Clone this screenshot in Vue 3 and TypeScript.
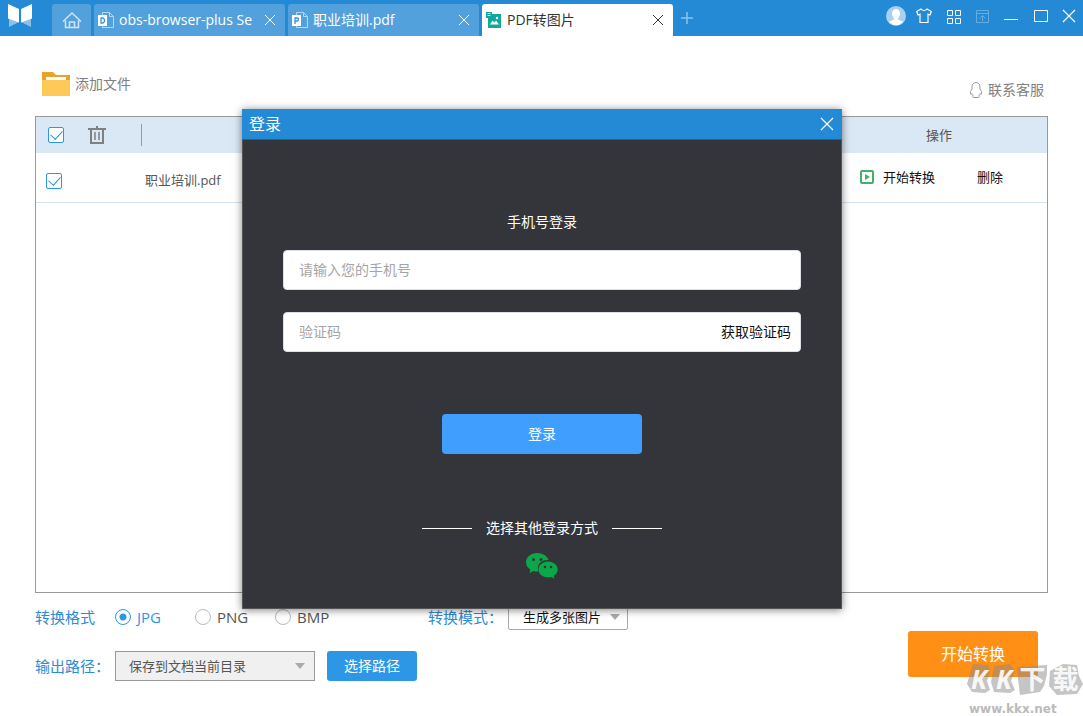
<script setup lang="ts">
import { ref } from 'vue'

interface Tab {
  title: string
  icon: 'obs' | 'pdf' | 'image'
  active: boolean
}

const tabs: Tab[] = [
  { title: 'obs-browser-plus Se', icon: 'obs', active: false },
  { title: '职业培训.pdf', icon: 'pdf', active: false },
  { title: 'PDF转图片', icon: 'image', active: true },
]
const formats = ['JPG', 'PNG', 'BMP']
const format = ref('JPG')
const allChecked = ref(true)
const files = ref([{ name: '职业培训.pdf', checked: true }])
const phone = ref('')
const code = ref('')
</script>

<template>
  <div class="app">
    <header class="titlebar">
      <svg class="logo" viewBox="0 0 26 24" aria-hidden="true">
        <path d="M2 13v10l10-5zM24 13v10l-10-5z" fill="#8dc0e8" />
        <path d="M1 0l11 5v13.500L1 14.500zM25 0L14 5v13.500l11-4z" fill="#fff" />
      </svg>
      <button class="home" aria-label="首页">
        <svg viewBox="0 0 20 18" fill="none" stroke="#cfe4f5" stroke-width="1.500">
          <path d="M1 10.500L10 2l9 8.500M3.500 9.500V16.500h13V9.500M7.500 16v-5h5v5" />
        </svg>
      </button>
      <div v-for="tab in tabs" :key="tab.title" class="tab" :class="{ active: tab.active }">
        <svg v-if="tab.icon === 'image'" class="tab-icon" viewBox="0 0 16 17">
          <path d="M0 0h6v2h9v14H2V6H0z" fill="#13a89e" />
          <path d="M1.500 1.500h3M1.500 3.500h3" stroke="#bfe9e5" />
          <path d="M4 12.500l2.500-4 2 2 1.500-2 3 4z" fill="#fff" />
          <circle cx="11" cy="6" r="1.200" fill="#fff" />
        </svg>
        <svg v-else class="tab-icon" viewBox="0 0 16 17">
          <path d="M4.500 3V.5h7l4 4v11h-11V14M11.500.5v4h4" fill="none" stroke="#b5d7f0" />
          <rect x="0" y="3" width="9" height="11" fill="#fff" />
          <path v-if="tab.icon === 'obs'" d="M3 6h2l1.500 1.500v2L5 11H3z" fill="none" stroke="#3a93d6" stroke-width="1.300" />
          <path v-else d="M3 12V6h2.500q1 0 1 1.500T5.500 9H3" fill="none" stroke="#3a93d6" stroke-width="1.300" />
        </svg>
        <span class="tab-title">{{ tab.title }}</span>
        <button class="tab-close" aria-label="关闭标签">
          <svg viewBox="0 0 12 12"><path d="M1 1l10 10M11 1L1 11" stroke="currentColor" fill="none" /></svg>
        </button>
      </div>
      <button class="add" aria-label="新建标签">
        <svg viewBox="0 0 12 12"><path d="M6 0v12M0 6h12" stroke="#8dc2ea" stroke-width="1.500" /></svg>
      </button>
      <div class="window-tools">
        <button class="account" aria-label="账户">
          <svg class="avatar" viewBox="0 0 20 20">
            <circle cx="10" cy="10" r="10" fill="#a9d0ef" />
            <path d="M6 7.500C6 1.500 14 1.500 14 7.500c0 2-1 3.500-2 4.500v1.500l4.500 2c.5.300.5.500.1.900A9.500 9.500 0 0 1 3.400 16.400c-.4-.4-.4-.6.1-.9l4.500-2V12C7 11 6 9.500 6 7.500z" fill="#fff" />
          </svg>
        </button>
        <button aria-label="皮肤">
          <svg viewBox="0 0 16 16"><path d="M5 1L.700 3.500 2 7l2-.8V14.500h8V6.200l2 .8 1.300-3.500L11 1C9.500 3 6.500 3 5 1z" fill="none" stroke="#fff" stroke-width="1.200" /></svg>
        </button>
        <button aria-label="应用">
          <svg viewBox="0 0 16 16" fill="none" stroke="#fff"><path d="M2.500 2.500h5v5h-5zM10.500 2.500h5v5h-5zM2.500 10.500h5v5h-5zM10.500 10.500h5v5h-5z" /></svg>
        </button>
        <button aria-label="置顶">
          <svg viewBox="0 0 16 16" fill="none" stroke="#66addf"><path d="M2.500 2.500h12v12h-12zM2.500 5.500h12M8.500 13V8M5.500 10.500l3-3 3 3" /></svg>
        </button>
        <button aria-label="最小化">
          <svg viewBox="0 0 16 16"><path d="M1 11.500h14" stroke="#fff" /></svg>
        </button>
        <button aria-label="最大化">
          <svg viewBox="0 0 16 16"><path d="M2.500 2.500h13v11h-13z" stroke="#fff" fill="none" /></svg>
        </button>
        <button aria-label="关闭">
          <svg viewBox="0 0 16 16"><path d="M2 2l12 12M14 2L2 14" stroke="#fff" stroke-width="1.200" /></svg>
        </button>
      </div>
    </header>

    <div class="toolbar">
      <button class="add-file">
        <svg viewBox="0 0 28 24" aria-hidden="true">
          <path d="M0 0h11l3 3h14v12H0z" fill="#eaa127" />
          <path d="M4 5h20v4H4z" fill="#fff" />
          <path d="M0 8h28v16H0z" fill="#ffc957" />
        </svg>
        添加文件
      </button>
      <a class="service" href="#">
        <svg viewBox="0 0 12 16" fill="none" stroke="#999">
          <path d="M6 .500C3.500.500 2 2.500 2 5v2C.500 9 .200 10.500.500 12c.5.300 1 0 1.300-.5.300 1 .7 1.800 1.500 2.500-1 .500-.8 1.500.2 1.500h5c1 0 1.200-1 .2-1.500.8-.7 1.200-1.500 1.500-2.500.3.500.8.800 1.300.500.300-1.500 0-3-1.500-5V5C10 2.500 8.500.500 6 .500z" />
        </svg>
        联系客服
      </a>
    </div>

    <main class="files">
      <table>
        <colgroup>
          <col class="col-check" />
          <col />
          <col class="col-action" />
        </colgroup>
        <thead>
          <tr>
            <th>
              <div class="head-tools">
                <input v-model="allChecked" type="checkbox" aria-label="全选" />
                <button aria-label="清空">
                  <svg viewBox="0 0 18 18" fill="none" stroke="#808080">
                    <path d="M0 3h18M9 0v3M3 3v14h12V3" stroke-width="2" />
                    <path d="M7 6v8M11 6v8" stroke-width="1.500" />
                  </svg>
                </button>
              </div>
            </th>
            <th></th>
            <th>操作</th>
          </tr>
        </thead>
        <tbody>
          <tr v-for="file in files" :key="file.name">
            <td class="cell-check"><input v-model="file.checked" type="checkbox" :aria-label="file.name" /></td>
            <td class="cell-name">{{ file.name }}</td>
            <td>
              <div class="actions">
                <button>
                  <svg viewBox="0 0 14 14"><rect x="1" y="1" width="12" height="12" rx="1" fill="none" stroke="#3fb26d" stroke-width="2" /><path d="M5 4l5 3-5 3z" fill="#3fb26d" /></svg>
                  开始转换
                </button>
                <button>删除</button>
              </div>
            </td>
          </tr>
        </tbody>
      </table>
    </main>

    <footer class="options">
      <div class="settings">
        <div class="row">
          <span class="caption">转换格式</span>
          <label v-for="f in formats" :key="f" class="radio" :class="{ on: format === f }">
            <input v-model="format" type="radio" name="format" :value="f" />{{ f }}
          </label>
          <label class="mode-label" for="mode">转换模式：</label>
          <div class="select mode">
            <select id="mode"><option>生成多张图片</option></select>
          </div>
        </div>
        <div class="row path">
          <label class="caption" for="path">输出路径：</label>
          <div class="select output">
            <select id="path"><option>保存到文档当前目录</option></select>
          </div>
          <button class="choose">选择路径</button>
        </div>
      </div>
      <button class="start">开始转换</button>
    </footer>

    <div class="overlay">
      <section class="dialog" role="dialog" aria-labelledby="login-title">
        <div class="dialog-head">
          <h2 id="login-title">登录</h2>
          <button aria-label="关闭登录">
            <svg viewBox="0 0 14 14"><path d="M1 1l12 12M13 1L1 13" stroke="#fff" stroke-width="1.200" /></svg>
          </button>
        </div>
        <form class="dialog-body" @submit.prevent>
          <p class="subtitle">手机号登录</p>
          <div class="field"><input v-model="phone" type="tel" placeholder="请输入您的手机号" aria-label="手机号" /></div>
          <div class="field">
            <input v-model="code" type="text" placeholder="验证码" aria-label="验证码" />
            <button type="button">获取验证码</button>
          </div>
          <button class="login" type="submit">登录</button>
          <div class="other"><span>选择其他登录方式</span></div>
          <button class="wechat" type="button" aria-label="微信登录">
            <svg viewBox="0 0 32 26">
              <path d="M11 0C5 0 0 4 0 9.300c0 3 1.700 5.600 4.300 7.300L3.500 20l4-2c1.500.4 3 .6 5 .5C10 11 16 6.500 22.500 7 21.500 3 16.500 0 11 0z" fill="#0ba84a" />
              <path d="M22 8.500c-5.500 0-9.500 3.700-9.500 8s4 8 9.500 8c1.200 0 2.300-.2 3.300-.5l3.200 1.800-.8-3c2.500-1.500 4-3.700 4-6.300 0-4.300-4.200-8-9.700-8z" fill="#0ba84a" />
              <g fill="#34353a"><circle cx="7.500" cy="6.500" r="1.500" /><circle cx="15" cy="6.500" r="1.500" /><circle cx="19" cy="14" r="1.300" /><circle cx="25" cy="14" r="1.300" /></g>
            </svg>
          </button>
        </form>
      </section>
    </div>

    <div class="watermark">
      <div class="mark">
        <svg viewBox="0 0 116 33" aria-hidden="true">
          <path d="M6 0l16 1 1 8-3 8 3 9-5 3-13-1-5-8 3-11zM27 2l16-2 5 7-4 10 4 9-5 3-16-1-3-10zM50 3l30-2v9l-3 12-4 6-20 3-2-16zM83 7l13-7 14 1 2 11 4 8-6 10-20 1-8-9z" fill="#8c8c8c" fill-opacity=".5" />
        </svg>
        <div class="letters"><i>K</i><i>K</i><span>下</span><span>载</span></div>
      </div>
      <div class="site">www.kkx.net</div>
    </div>
  </div>
</template>

<style>
body {
  margin: 0;
}
</style>

<style scoped>
.app {
  position: relative;
  display: flex;
  flex-direction: column;
  min-height: 100vh;
  background: #fff;
  color: #555;
  font-family: "Open Sans", "Noto Sans CJK SC", sans-serif;
  font-size: 14px;
  line-height: 20px;
}
* {
  box-sizing: border-box;
}
svg {
  display: block;
  flex: none;
}
button,
input,
select {
  font: inherit;
  color: inherit;
  margin: 0;
}
button {
  border: 0;
  padding: 0;
  background: none;
}

.titlebar {
  display: flex;
  align-items: flex-end;
  height: 36px;
  padding-left: 7px;
  background: #258ad5;
}
.logo {
  width: 26px;
  height: 24px;
  align-self: flex-start;
  margin: 4px 19px 0 0;
}
.home,
.tab {
  height: 32px;
  background: #52a1dd;
  border-radius: 3px 3px 0 0;
  margin-right: 3px;
}
.home {
  width: 39px;
  padding-left: 10px;
}
.home svg {
  width: 20px;
  height: 18px;
}
.tab {
  display: flex;
  align-items: center;
  flex: 0 1 191px;
  min-width: 0;
  padding: 0 9px 0 4px;
  color: #fff;
}
.tab.active {
  background: #fff;
  color: #333;
  margin-right: 0;
}
.tab-icon {
  width: 16px;
  height: 17px;
}
.tab-title {
  flex: 1;
  margin-left: 5px;
  overflow: hidden;
  white-space: nowrap;
}
.tab-close svg,
.add svg {
  width: 12px;
  height: 12px;
}
.add {
  align-self: center;
  margin-left: 8px;
}
.window-tools {
  display: flex;
  align-items: center;
  gap: 13px;
  height: 32px;
  align-self: flex-start;
  margin: 0 6px 0 auto;
}
.window-tools svg {
  width: 16px;
  height: 16px;
}
.window-tools .avatar {
  width: 20px;
  height: 20px;
}
.account {
  margin-right: -3px;
}

.toolbar {
  display: flex;
  justify-content: space-between;
  height: 80px;
  padding: 36px 39px 0 42px;
  color: #808080;
}
.add-file {
  display: flex;
  align-items: center;
  gap: 5px;
  height: 24px;
}
.add-file svg {
  width: 28px;
  height: 24px;
}
.service {
  display: flex;
  align-items: center;
  gap: 6px;
  height: 36px;
  color: inherit;
  text-decoration: none;
}
.service svg {
  width: 12px;
  height: 16px;
}

.files {
  flex: 1;
  margin: 0 35px;
  border: 1px solid #999;
}
table {
  width: 100%;
  table-layout: fixed;
  border-collapse: collapse;
  font-size: 13px;
}
.col-check {
  width: 106px;
}
.col-action {
  width: 216px;
}
th,
td {
  padding: 0;
  font-weight: 400;
}
th {
  height: 36px;
  background: #dae7f4;
}
.head-tools {
  display: flex;
  align-items: center;
  justify-content: space-between;
  height: 22px;
  padding: 0 35px 0 12px;
  border-right: 1px solid #999;
}
.head-tools svg {
  width: 18px;
  height: 18px;
}
tbody tr {
  height: 49px;
  border-bottom: 1px solid #d5e4f2;
}
input[type="checkbox"] {
  appearance: none;
  display: block;
  position: relative;
  width: 16px;
  height: 16px;
  border: 1px solid #2e97e5;
  border-radius: 2px;
  background: #fff;
}
input[type="checkbox"]:checked::after {
  content: "";
  position: absolute;
  left: 4px;
  top: 0;
  width: 6px;
  height: 10px;
  border: solid #2e97e5;
  border-width: 0 1px 1px 0;
  transform: rotate(42deg);
}
.cell-check {
  padding: 8px 0 0 10px;
}
.cell-name {
  padding: 6px 0 0 3px;
}
.actions {
  display: flex;
  gap: 42px;
  padding-left: 29px;
  color: #111;
}
.actions button {
  display: flex;
  align-items: center;
  gap: 9px;
}
.actions svg {
  width: 14px;
  height: 14px;
}

.options {
  display: flex;
  justify-content: space-between;
  align-items: flex-start;
  height: 123px;
  padding: 11px 45px 0 35px;
  font-size: 15px;
}
.row {
  display: flex;
  align-items: center;
  height: 26px;
}
.row.path {
  height: 30px;
  margin-top: 21px;
}
.caption {
  width: 80px;
  white-space: nowrap;
}
.caption,
.mode-label {
  color: #2e8cd3;
}
.radio {
  display: flex;
  align-items: center;
  gap: 6px;
  width: 80px;
}
.radio.on {
  color: #2e97e5;
}
.radio input {
  appearance: none;
  width: 16px;
  height: 16px;
  border: 1px solid #bbb;
  border-radius: 50%;
}
.radio input:checked {
  border-color: #2e97e5;
  background: radial-gradient(circle, #2e97e5 3px, transparent 4px);
}
.mode-label {
  width: 80px;
  margin-left: 73px;
  white-space: nowrap;
}
.select {
  position: relative;
  height: 100%;
}
.select::after {
  content: "";
  position: absolute;
  right: 8px;
  top: 50%;
  margin-top: -3px;
  border: 5px solid transparent;
  border-top: 6px solid #aaa;
  border-bottom: 0;
}
.select select {
  appearance: none;
  width: 100%;
  height: 100%;
  padding: 0 14px;
  border: 1px solid #aaa;
  border-radius: 2px;
  background: #fff;
  color: #111;
  font-size: 13px;
}
.mode {
  width: 120px;
}
.output {
  width: 200px;
}
.output::after {
  right: 10px;
}
.output select {
  padding-left: 13px;
  border-color: #999;
  border-radius: 0;
  background: #f0f0f0;
  color: #555;
}
.choose {
  width: 90px;
  height: 30px;
  margin-left: 12px;
  border-radius: 3px;
  background: #2e97e5;
  color: #fff;
  font-size: 14px;
}
.start {
  width: 130px;
  height: 46px;
  margin-top: 27px;
  border-radius: 3px;
  background: #ff9015;
  color: #fff;
  font-size: 16px;
}

.overlay {
  position: absolute;
  inset: 0;
  display: flex;
  align-items: center;
  justify-content: center;
  padding: 2px 0 0 1px;
}
.dialog {
  width: 600px;
  background: #34353a;
  border: 1px solid #555;
  border-top: 0;
  box-shadow: 0 1px 8px rgba(0, 0, 0, 0.5);
  color: #fff;
}
.dialog-head {
  display: flex;
  align-items: center;
  justify-content: space-between;
  height: 31px;
  margin: 0 -1px;
  padding: 0 8px 0 7px;
  background: #258ad5;
  border-bottom: 1px solid #555;
}
.dialog-head h2 {
  margin: 0;
  font-size: 16px;
  font-weight: 400;
}
.dialog-head svg {
  width: 14px;
  height: 14px;
}
.dialog-body {
  display: flex;
  flex-direction: column;
  align-items: center;
  padding: 72px 40px 29px;
}
.subtitle {
  margin: 0 0 18px;
}
.field {
  display: flex;
  align-items: center;
  align-self: stretch;
  height: 40px;
  margin-bottom: 22px;
  padding: 0 9px 0 15px;
  border: 1px solid #dcdfe6;
  border-radius: 4px;
  background: #fff;
  color: #111;
}
.field input {
  flex: 1;
  min-width: 0;
  padding: 0;
  border: 0;
  outline: 0;
  background: none;
}
.field input::placeholder {
  color: #a5a5a5;
}
.login {
  width: 200px;
  height: 40px;
  margin: 40px 0 64px;
  border-radius: 4px;
  background: #409eff;
}
.other {
  display: flex;
  align-items: center;
  gap: 14px;
}
.other::before,
.other::after {
  content: "";
  width: 50px;
  height: 1px;
  background: #fff;
}
.wechat {
  margin-top: 15px;
}
.wechat svg {
  width: 32px;
  height: 26px;
}

.watermark {
  position: absolute;
  right: 0;
  bottom: 0;
  width: 116px;
  pointer-events: none;
}
.mark {
  position: relative;
  height: 38px;
}
.mark svg {
  width: 116px;
  height: 33px;
}
.letters {
  position: absolute;
  inset: 0;
  display: grid;
  grid-template-columns: 24px 26px 31px 35px;
  color: rgba(255, 255, 255, 0.9);
  font-size: 26px;
  font-weight: 700;
  line-height: 31px;
  text-align: center;
}
.site {
  padding-left: 2px;
  color: #bbb;
  font-family: "DejaVu Sans", sans-serif;
  font-size: 12px;
  font-weight: 700;
  line-height: 14px;
}
</style>
